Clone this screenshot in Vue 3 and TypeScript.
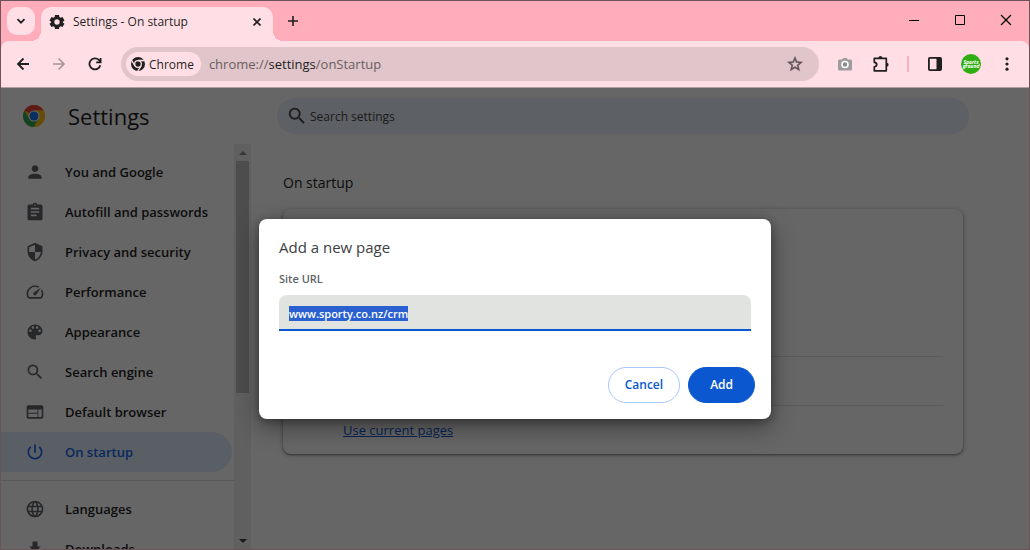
<script setup lang="ts">
import { onMounted, ref } from 'vue'

interface NavItem {
  label: string
  path: string
  active?: boolean
}

const mainItems: NavItem[] = [
  { label: 'You and Google', path: 'M12 12c2.2 0 4-1.8 4-4s-1.8-4-4-4-4 1.8-4 4 1.8 4 4 4zm0 2c-2.7 0-8 1.300-8 4v2h16v-2c0-2.700-5.300-4-8-4z' },
  { label: 'Autofill and passwords', path: 'M19 3h-4.180C14.400 1.840 13.300 1 12 1s-2.400.84-2.820 2H5c-1.100 0-2 .9-2 2v15c0 1.100.9 2 2 2h14c1.100 0 2-.9 2-2V5c0-1.100-.9-2-2-2zm-7 0c.55 0 1 .45 1 1s-.45 1-1 1-1-.45-1-1 .45-1 1-1zm2 14H7v-2h7v2zm3-4H7v-2h10v2zm0-4H7V7h10v2z' },
  { label: 'Privacy and security', path: 'M12 1 3 5v6c0 5.550 3.840 10.740 9 12 5.160-1.260 9-6.450 9-12V5l-9-4zm0 10.990h7c-.53 4.120-3.280 7.790-7 8.940V12H5V6.300l7-3.110v8.800z' },
  { label: 'Performance', path: 'm20.380 8.570-1.230 1.850a8 8 0 0 1-.22 7.580H5.070A8 8 0 0 1 15.580 6.850l1.850-1.230A10 10 0 0 0 3.350 19a2 2 0 0 0 1.720 1h13.850a2 2 0 0 0 1.740-1 10 10 0 0 0-.27-10.440zm-9.790 6.840a2 2 0 0 0 2.830 0l5.660-8.490-8.490 5.660a2 2 0 0 0 0 2.830z' },
  { label: 'Appearance', path: 'M12 3c-4.970 0-9 4.030-9 9s4.030 9 9 9c.83 0 1.500-.67 1.500-1.500 0-.39-.15-.74-.39-1.010-.23-.26-.38-.61-.38-.99 0-.83.67-1.500 1.500-1.500H16c2.760 0 5-2.240 5-5 0-4.420-4.030-8-9-8zm-5.500 9c-.83 0-1.500-.67-1.500-1.500S5.670 9 6.500 9 8 9.670 8 10.500 7.330 12 6.500 12zm3-4C8.670 8 8 7.330 8 6.500S8.670 5 9.500 5s1.500.67 1.500 1.500S10.330 8 9.500 8zm5 0c-.83 0-1.500-.67-1.500-1.500S13.670 5 14.500 5s1.500.67 1.500 1.500S15.330 8 14.500 8zm3 4c-.83 0-1.500-.67-1.500-1.500S16.670 9 17.500 9s1.500.67 1.500 1.500-.67 1.500-1.500 1.500z' },
  { label: 'Search engine', path: 'M15.500 14h-.79l-.28-.27A6.470 6.470 0 0 0 16 9.500 6.500 6.500 0 1 0 9.500 16c1.610 0 3.090-.59 4.230-1.570l.27.28v.79l5 4.990L20.490 19l-4.990-5zm-6 0C7.010 14 5 11.990 5 9.500S7.010 5 9.500 5 14 7.010 14 9.500 11.990 14 9.500 14z' },
  { label: 'Default browser', path: 'M20 4H4c-1.100 0-2 .9-2 2v12c0 1.100.9 2 2 2h16c1.100 0 2-.9 2-2V6c0-1.100-.9-2-2-2zm-5 14H4v-4h11v4zm0-5H4V9h11v4zm5 5h-4V9h4v9z' },
  { label: 'On startup', active: true, path: 'M13 3h-2v10h2V3zm4.830 2.170-1.420 1.420A6.920 6.920 0 0 1 19 12c0 3.870-3.130 7-7 7s-7-3.130-7-7c0-2.190 1.010-4.140 2.580-5.420L6.170 5.170A8.930 8.930 0 0 0 3 12a9 9 0 0 0 18 0c0-2.740-1.230-5.180-3.170-6.830z' },
]

const moreItems: NavItem[] = [
  { label: 'Languages', path: 'M11.990 2C6.470 2 2 6.480 2 12s4.470 10 9.990 10C17.520 22 22 17.520 22 12S17.520 2 11.990 2zm6.930 6h-2.950a15.650 15.650 0 0 0-1.380-3.560A8.030 8.030 0 0 1 18.920 8zM12 4.040c.83 1.200 1.480 2.530 1.910 3.960h-3.820c.43-1.430 1.080-2.760 1.910-3.960zM4.260 14C4.100 13.360 4 12.690 4 12s.1-1.360.26-2h3.380c-.08.66-.14 1.320-.14 2s.06 1.340.14 2H4.260zm.82 2h2.950c.32 1.250.78 2.450 1.380 3.560A7.990 7.990 0 0 1 5.080 16zm2.950-8H5.080a7.990 7.990 0 0 1 4.330-3.560A15.650 15.650 0 0 0 8.030 8zM12 19.960c-.83-1.200-1.480-2.530-1.910-3.960h3.820c-.43 1.430-1.080 2.760-1.910 3.960zM14.340 14H9.660c-.09-.66-.16-1.320-.16-2s.07-1.350.16-2h4.680c.09.65.16 1.320.16 2s-.07 1.340-.16 2zm.25 5.560c.6-1.110 1.060-2.310 1.380-3.560h2.950a8.030 8.030 0 0 1-4.330 3.560zM16.360 14c.08-.66.14-1.320.14-2s-.06-1.340-.14-2h3.380c.16.64.26 1.310.26 2s-.1 1.360-.26 2h-3.380z' },
  { label: 'Downloads', path: 'M19 9h-4V3H9v6H5l7 7 7-7zM5 18v2h14v-2H5z' },
]

const navGroups = [mainItems, moreItems]
const siteUrl = ref('www.sporty.co.nz/crm')
const urlInput = ref<HTMLInputElement | null>(null)

onMounted(() => {
  urlInput.value?.focus({ preventScroll: true })
  urlInput.value?.select()
})
</script>

<template>
  <div class="window">
    <header class="tabstrip">
      <button class="tab-search" aria-label="Search tabs">
        <svg width="10" height="10" viewBox="0 0 10 10"><path d="m1.500 3.200 3.500 3.500 3.500-3.500" fill="none" stroke="currentColor" stroke-width="1.800" /></svg>
      </button>
      <div class="tab">
        <svg width="16" height="16" viewBox="0 0 24 24"><path fill="currentColor" fill-rule="evenodd" d="m9 1.500-.6 3.100-1.700 1L3.700 4.500.8 9.600l2.400 2v1l-2.400 2 2.900 5 3-1.100 1.700 1 .6 3.100h6l.6-3.100 1.700-1 3 1.100 2.900-5-2.400-2v-1l2.400-2-2.900-5.100-3 1.100-1.700-1-.6-3.100H9zm3 6.500a4 4 0 1 1 0 8 4 4 0 0 1 0-8z" /></svg>
        <span class="tab-title">Settings - On startup</span>
        <button class="tab-close" aria-label="Close tab">
          <svg width="8" height="8" viewBox="0 0 8 8"><path d="m.5.5 7 7m0-7-7 7" stroke="currentColor" stroke-width="1.600" /></svg>
        </button>
      </div>
      <button class="new-tab" aria-label="New tab">
        <svg width="12" height="12" viewBox="0 0 12 12"><path d="M6 1v10M1 6h10" stroke="currentColor" stroke-width="1.600" /></svg>
      </button>
      <div class="caption-buttons">
        <button aria-label="Minimize"><svg width="12" height="12" viewBox="0 0 12 12"><path d="M1 6.500h10" stroke="currentColor" /></svg></button>
        <button aria-label="Maximize"><svg width="12" height="12" viewBox="0 0 12 12"><path d="M1.500 1.500h9v9h-9z" fill="none" stroke="currentColor" /></svg></button>
        <button aria-label="Close"><svg width="12" height="12" viewBox="0 0 12 12"><path d="m1 1 10 10m0-10L1 11" stroke="currentColor" stroke-width="1.200" /></svg></button>
      </div>
    </header>

    <div class="toolbar">
      <button class="tool" aria-label="Back">
        <svg width="14" height="14" viewBox="0 0 14 14"><path d="M13 7H2m5.500-5.500L2 7l5.500 5.500" fill="none" stroke="currentColor" stroke-width="1.800" /></svg>
      </button>
      <button class="tool faded" aria-label="Forward">
        <svg width="14" height="14" viewBox="0 0 14 14"><path d="M1 7h11M6.500 1.500 12 7l-5.500 5.500" fill="none" stroke="currentColor" stroke-width="1.600" /></svg>
      </button>
      <button class="tool" aria-label="Reload">
        <svg width="14" height="14" viewBox="0 0 14 14"><path d="M12.300 8.200A5.500 5.500 0 1 1 11 3.200L12.500 4.700M12.600 1v4.400H8.200" fill="none" stroke="currentColor" stroke-width="1.800" /></svg>
      </button>
      <div class="omnibox">
        <button class="chip">
          <svg width="16" height="16" viewBox="0 0 16 16">
            <circle cx="8" cy="8" r="7" fill="#1f1f1f" />
            <circle cx="8" cy="8" r="3.300" fill="none" stroke="#ffdfe5" stroke-width="1.300" />
            <path d="M8 4.500h6.700M4.900 9.800 1.500 4M11 9.800 7.600 15.500" stroke="#ffdfe5" stroke-width="1.300" />
          </svg>
          <span>Chrome</span>
        </button>
        <span class="url">chrome://<b>settings</b>/onStartup</span>
        <button class="star" aria-label="Bookmark this tab">
          <svg width="18" height="18" viewBox="0 0 24 24"><path fill="currentColor" stroke="currentColor" stroke-width=".6" d="m22 9.240-7.190-.62L12 2 9.190 8.630 2 9.240l5.460 4.730L5.820 21 12 17.270 18.180 21l-1.630-7.030L22 9.240zM12 15.400l-3.760 2.270 1-4.280-3.320-2.880 4.380-.38L12 6.100l1.710 4.040 4.380.38-3.320 2.880 1 4.280L12 15.400z" /></svg>
        </button>
      </div>
      <button class="tool" aria-label="Screenshot">
        <svg width="16" height="16" viewBox="0 0 16 16">
          <path d="M2.500 3.500h2.700l1-1.500h3.600l1 1.500h2.700a1.500 1.500 0 0 1 1.500 1.500v8a1.500 1.500 0 0 1-1.500 1.500h-11A1.500 1.500 0 0 1 1 13V5a1.500 1.500 0 0 1 1.500-1.500z" fill="#a09c9e" />
          <circle cx="8" cy="8.500" r="3" fill="#8b8b8d" stroke="#fff" stroke-width="1.600" />
        </svg>
      </button>
      <button class="tool" aria-label="Extensions">
        <svg width="18" height="18" viewBox="0 0 18 18">
          <path d="M2.300 3.300h12v12.500h-12v-4c3.200-.2 3.200-4.300 0-4.500v-4z" fill="none" stroke="currentColor" stroke-width="1.700" stroke-linejoin="round" />
          <path d="M6.500 3a1.900 1.900 0 0 1 3.800 0zM14.700 7.800a1.900 1.900 0 0 1 0 3.800z" fill="currentColor" />
        </svg>
      </button>
      <span class="divider"></span>
      <button class="tool" aria-label="Side panel">
        <svg width="16" height="16" viewBox="0 0 16 16"><rect x="1.900" y="1.900" width="12.200" height="12.200" rx="1" fill="none" stroke="currentColor" stroke-width="1.800" /><path d="M9.500 2H14v12H9.500z" fill="currentColor" /></svg>
      </button>
      <button class="tool" aria-label="Profile"><span class="avatar"><i>Sports</i><i>ground</i></span></button>
      <button class="tool" aria-label="Menu">
        <svg width="16" height="16" viewBox="0 0 16 16" fill="currentColor"><circle cx="8" cy="2.800" r="1.600" /><circle cx="8" cy="8" r="1.600" /><circle cx="8" cy="13.200" r="1.600" /></svg>
      </button>
    </div>

    <div class="content">
      <aside class="sidebar">
        <div class="brand">
          <svg width="24" height="24" viewBox="0 0 24 24">
            <circle cx="12" cy="12" r="11" fill="#fbc116" />
            <path d="M12 12 2.470 6.500A11 11 0 0 1 21.530 6.500H12z" fill="#ea4335" />
            <path d="M2.470 6.500A11 11 0 0 0 12 23l4.800-8.300L12 12 7.200 14.700z" fill="#34a853" />
            <path d="M12 6.500h9.530A11 11 0 0 1 12 23l4.800-8.300z" fill="#fbc116" />
            <circle cx="12" cy="12" r="5.500" fill="#fff" />
            <circle cx="12" cy="12" r="4.500" fill="#1a73e8" />
          </svg>
          <h1>Settings</h1>
        </div>
        <div class="menu">
          <nav>
            <ul v-for="(group, index) in navGroups" :key="index">
              <li v-for="item in group" :key="item.label">
                <a href="#" :class="{ active: item.active }">
                  <svg width="20" height="20" viewBox="0 0 24 24"><path fill="currentColor" :d="item.path" /></svg>
                  {{ item.label }}
                </a>
              </li>
            </ul>
          </nav>
          <div class="scrollbar">
            <span class="arrow up"></span>
            <span class="thumb"></span>
            <span class="arrow down"></span>
          </div>
        </div>
      </aside>

      <main>
        <label class="search">
          <svg width="22" height="22" viewBox="0 0 24 24"><path fill="currentColor" :d="mainItems[5].path" /></svg>
          <input type="text" placeholder="Search settings" aria-label="Search settings" />
        </label>
        <h2>On startup</h2>
        <section class="card">
          <div class="row tall"></div>
          <div class="row"></div>
          <div class="row link-row"><a href="#">Use current pages</a></div>
        </section>
      </main>

      <div class="scrim">
        <form class="dialog" role="dialog" aria-labelledby="dialog-title" @submit.prevent>
          <h3 id="dialog-title">Add a new page</h3>
          <label for="site-url">Site URL</label>
          <input id="site-url" ref="urlInput" v-model="siteUrl" type="text" spellcheck="false" />
          <div class="actions">
            <button type="button" class="cancel">Cancel</button>
            <button type="submit" class="add">Add</button>
          </div>
        </form>
      </div>
    </div>
  </div>
</template>

<style>
body {
  margin: 0;
}
</style>

<style scoped>
* {
  box-sizing: border-box;
}
.window {
  display: flex;
  flex-direction: column;
  height: 100vh;
  overflow: hidden;
  border: 1px solid #6b5359;
  background: #ffadbb;
  color: #1f1f1f;
  font-family: "Open Sans", "Noto Sans", sans-serif;
  font-size: 13px;
}
button {
  display: flex;
  align-items: center;
  justify-content: center;
  padding: 0;
  border: 0;
  background: none;
  color: inherit;
  font: inherit;
}
svg {
  flex: none;
}
h1, h2, h3, ul {
  margin: 0;
  padding: 0;
  font-weight: 400;
}
.tabstrip {
  display: flex;
  height: 40px;
  flex: none;
  padding-left: 6px;
}
.tab-search {
  width: 28px;
  height: 28px;
  margin-top: 6px;
  border-radius: 10px;
  background: #ffdfe5;
}
.tab {
  position: relative;
  display: flex;
  align-items: center;
  width: 232px;
  margin: 6px 0 0 6px;
  padding: 0 8px 5px;
  border-radius: 10px 10px 0 0;
  background: #ffdfe5;
}
.tab::before,
.tab::after {
  content: "";
  position: absolute;
  bottom: 0;
  width: 10px;
  height: 10px;
}
.tab::before {
  right: 100%;
  background: radial-gradient(circle at 0 0, transparent 10px, #ffdfe5 10px);
}
.tab::after {
  left: 100%;
  background: radial-gradient(circle at 100% 0, transparent 10px, #ffdfe5 10px);
}
.tab-title {
  flex: 1;
  margin-left: 8px;
  font-size: 12px;
  white-space: nowrap;
}
.tab-close {
  width: 16px;
  height: 16px;
}
.new-tab {
  width: 28px;
  height: 28px;
  margin: 6px 0 0 6px;
}
.caption-buttons {
  display: flex;
  margin-left: auto;
  color: #000;
}
.caption-buttons button {
  width: 46px;
  height: 38px;
}
.toolbar {
  display: flex;
  align-items: center;
  flex: none;
  height: 47px;
  padding: 0 8px;
  gap: 8px;
  border-bottom: 1px solid #b39fa3;
  border-radius: 8px 8px 0 0;
  background: #ffdfe5;
}
.tool {
  width: 28px;
  height: 28px;
  flex: none;
}
.faded {
  color: #a99498;
}
.omnibox {
  display: flex;
  align-items: center;
  flex: 1;
  height: 34px;
  margin: 0 4px;
  padding: 0 12px 0 5px;
  border-radius: 17px;
  background: #e0c5ca;
}
.chip {
  height: 24px;
  padding: 0 7px 0 4px;
  gap: 3px;
  border-radius: 12px;
  background: #ffdfe5;
  font-size: 12px;
  font-weight: 500;
}
.url {
  flex: 1;
  margin-left: 8px;
  color: #6a5d60;
  font-size: 13px;
}
.url b {
  color: #1f1f1f;
  font-weight: 400;
}
.star {
  width: 24px;
  height: 24px;
  color: #5e5355;
}
.divider {
  width: 2px;
  height: 16px;
  margin: 0 4px;
  background: #ffadbb;
}
.avatar {
  display: flex;
  flex-direction: column;
  justify-content: center;
  width: 20px;
  height: 20px;
  border-radius: 50%;
  background: #2fae12;
  color: #fff;
  font-size: 5px;
  font-weight: 700;
  line-height: 4px;
  text-align: center;
  overflow: hidden;
}
.content {
  position: relative;
  display: flex;
  flex: 1;
  min-height: 0;
  background: #fff;
}
.sidebar {
  display: flex;
  flex-direction: column;
  width: 250px;
  flex: none;
}
.brand {
  display: flex;
  align-items: center;
  height: 56px;
  padding-left: 21px;
  gap: 22px;
}
.brand h1 {
  font-size: 22px;
  font-weight: 500;
  line-height: 28px;
}
.menu {
  display: flex;
  flex: 1;
  min-height: 0;
}
nav {
  flex: 1;
  padding-top: 8px;
  overflow: hidden;
}
ul {
  list-style: none;
}
ul + ul {
  margin-top: 8px;
  padding-top: 8px;
  border-top: 1px solid #dadce0;
}
nav a {
  display: flex;
  align-items: center;
  height: 40px;
  margin-right: 2px;
  padding-left: 24px;
  gap: 20px;
  border-radius: 0 20px 20px 0;
  color: #1f1f1f;
  font-weight: 600;
  text-decoration: none;
  white-space: nowrap;
}
nav svg {
  color: #5f6368;
}
nav a.active,
nav a.active svg {
  color: #1764e8;
}
nav a.active {
  background: #e2edfd;
}
.scrollbar {
  display: flex;
  flex-direction: column;
  align-items: center;
  width: 17px;
  background: #f1f1f1;
}
.thumb {
  width: 13px;
  height: 232px;
  margin-bottom: auto;
  background: #c1c1c1;
}
.arrow {
  display: flex;
  align-items: center;
  justify-content: center;
  height: 17px;
}
.arrow::before {
  content: "";
  border: 4px solid transparent;
}
.up::before {
  border-top: 0;
  border-bottom-color: #888;
}
.down::before {
  border-bottom: 0;
  border-top-color: #404040;
}
main {
  flex: 1;
  min-width: 0;
  padding: 10px 60px 0 26px;
}
.search {
  display: flex;
  align-items: center;
  height: 36px;
  padding: 0 12px 0 9px;
  gap: 2px;
  border-radius: 18px;
  background: #e9f1fb;
}
.search svg {
  color: #444746;
}
.search input {
  flex: 1;
  padding: 0;
  border: 0;
  outline: 0;
  background: none;
  font: 500 12px "Open Sans", "Noto Sans", sans-serif;
}
.search input::placeholder {
  color: #444746;
  opacity: 1;
}
h2 {
  margin: 39px 6px 16px;
  font-size: 14px;
  line-height: 20px;
}
.card {
  margin: 0 6px;
  padding: 0 20px;
  border-radius: 8px;
  box-shadow: 0 1px 2px rgba(60, 64, 67, .5), 0 1px 4px 1px rgba(60, 64, 67, .25);
}
.row {
  height: 49px;
}
.row + .row {
  border-top: 1px solid #e4e4e4;
}
.row.tall {
  height: 147px;
}
.link-row {
  display: flex;
  align-items: center;
  padding-left: 40px;
}
.link-row a {
  color: #0b57d0;
}
.scrim {
  position: absolute;
  inset: 0;
  display: flex;
  align-items: center;
  justify-content: center;
  background: rgba(0, 0, 0, .6);
}
.dialog {
  display: flex;
  flex-direction: column;
  width: 512px;
  padding: 16px 20px;
  border-radius: 8px;
  background: #fff;
  box-shadow: 0 8px 24px rgba(0, 0, 0, .4), 0 2px 8px rgba(0, 0, 0, .3);
}
.dialog h3 {
  color: #3c4043;
  font-size: 15px;
  line-height: 24px;
}
.dialog label {
  margin: 12px 0 8px;
  color: #5f6368;
  font-size: 11px;
  font-weight: 600;
  line-height: 16px;
}
.dialog input {
  height: 36px;
  padding: 3px 10px 0;
  border: 0;
  border-bottom: 2px solid #0b57d0;
  border-radius: 8px 8px 0 0;
  outline: 0;
  background: #e1e3e1;
  color: #1f1f1f;
  font: 600 11px/16px "Open Sans", "Noto Sans", sans-serif;
}
.dialog input::selection {
  background: #2a60cf;
  color: #fff;
}
.actions {
  display: flex;
  justify-content: flex-end;
  gap: 8px;
  margin: 36px -4px 0 0;
}
.actions button {
  height: 36px;
  padding: 0 16px;
  border: 1px solid #a8c7fa;
  border-radius: 18px;
  color: #0b57d0;
  font-size: 12px;
  font-weight: 600;
}
.actions .add {
  padding: 0 21px;
  border-color: #0b57d0;
  background: #0b57d0;
  color: #fff;
}
</style>
